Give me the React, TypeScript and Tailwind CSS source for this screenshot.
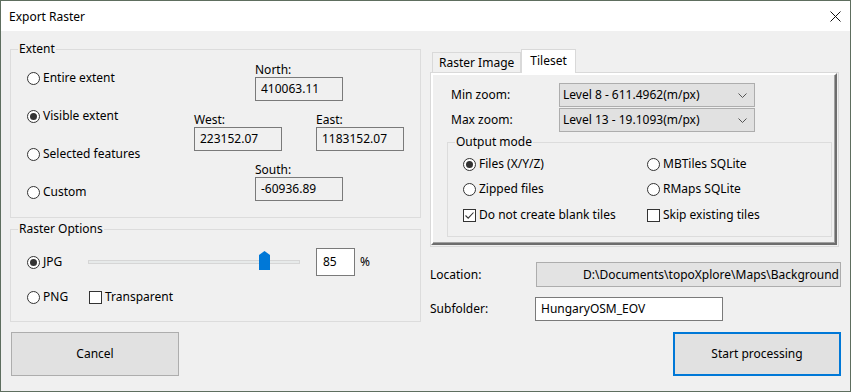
import React from "react";

const Radio = ({ checked }: { checked?: boolean }) => (
  <span className="w-[13px] h-[13px] rounded-full border border-[#333333] bg-white flex items-center justify-center shrink-0">
    {checked && <span className="w-[7px] h-[7px] rounded-full bg-[#333333]" />}
  </span>
);

const Check = ({ checked }: { checked?: boolean }) => (
  <span className="w-[13px] h-[13px] border border-[#333333] bg-white flex items-center justify-center shrink-0">
    {checked && (
      <svg width="11" height="11" viewBox="0 0 11 11">
        <path d="M1.5 5.5 L4.2 8.2 L9.5 2.5" fill="none" stroke="#333333" strokeWidth="1.1" />
      </svg>
    )}
  </span>
);

const RadioRow = ({ label, checked }: { label: string; checked?: boolean }) => (
  <div className="flex items-center gap-[3px]">
    <Radio checked={checked} />
    <span>{label}</span>
  </div>
);

const Coord = ({ label, value, className = "" }: { label: string; value: string; className?: string }) => (
  <div className={"flex flex-col " + className}>
    <div className="h-[15px] leading-[15px]">{label}</div>
    <div className="w-[88px] h-[24px] border border-[#7a7a7a] bg-[#f0f0f0] px-[5px] flex items-center">{value}</div>
  </div>
);

const Chevron = () => (
  <svg width="9" height="5" viewBox="0 0 9 5">
    <path d="M0.5 0.5 L4.5 4.5 L8.5 0.5" fill="none" stroke="#555555" strokeWidth="1" />
  </svg>
);

const Combo = ({ value }: { value: string }) => (
  <div className="w-[196px] h-[24px] border border-[#adadad] bg-[#e1e1e1] flex items-center justify-between pl-[3px] pr-[7px]">
    <span>{value}</span>
    <Chevron />
  </div>
);

export default function App() {
  return (
    <div
      className="w-[851px] h-[392px] border border-[#5e6e5f] flex flex-col text-[12px] text-black"
      style={{ fontFamily: '"Noto Sans", "Liberation Sans", sans-serif' }}
    >
      {/* Title bar */}
      <div className="h-[30px] bg-white flex items-center justify-between pl-[8px] pr-[9px] pt-[1px] shrink-0">
        <span>Export Raster</span>
        <svg width="11" height="11" viewBox="0 0 11 11">
          <path d="M0.5 0.5 L10.5 10.5 M10.5 0.5 L0.5 10.5" stroke="#111111" strokeWidth="1" />
        </svg>
      </div>

      {/* Body */}
      <div className="flex-1 bg-[#f0f0f0] flex pt-[18px] pl-[9px] pr-[9px] gap-[9px]">
        {/* Left column */}
        <div className="w-[411px] flex flex-col">
          {/* Extent */}
          <div className="relative h-[169px] border border-[#dcdcdc] flex">
            <span className="absolute -top-[9px] left-[7px] px-[1px] bg-[#f0f0f0] leading-[16px]">Extent</span>
            <div className="w-[183px] pl-[16px] pt-[9px] flex flex-col">
              <div className="h-[38px] flex items-center"><RadioRow label="Entire extent" /></div>
              <div className="h-[38px] flex items-center"><RadioRow label="Visible extent" checked /></div>
              <div className="h-[38px] flex items-center"><RadioRow label="Selected features" /></div>
              <div className="h-[38px] flex items-center"><RadioRow label="Custom" /></div>
            </div>
            <div className="pt-[12px] flex flex-col gap-[11px]">
              <Coord label="North:" value="410063.11" className="ml-[61px]" />
              <div className="flex gap-[34px]">
                <Coord label="West:" value="223152.07" />
                <Coord label="East:" value="1183152.07" />
              </div>
              <Coord label="South:" value="-60936.89" className="ml-[61px]" />
            </div>
          </div>

          {/* Raster options */}
          <div className="relative mt-[11px] h-[93px] border border-[#dcdcdc] pl-[16px] pt-[20px] flex flex-col gap-[11px]">
            <span className="absolute -top-[9px] left-[7px] px-[1px] bg-[#f0f0f0] leading-[16px]">Raster Options</span>
            <div className="h-[24px] flex items-center">
              <div className="w-[61px]"><RadioRow label="JPG" checked /></div>
              <div className="relative w-[212px] h-[20px] flex items-center">
                <div className="w-full h-[4px] bg-[#e7eaea] border border-[#d6d6d6]" />
                <svg className="absolute left-[171px] top-[-1px]" width="11" height="19" viewBox="0 0 11 19">
                  <path d="M0 4 L5.5 0 L11 4 L11 19 L0 19 Z" fill="#0078d7" />
                </svg>
              </div>
              <div className="ml-[16px] w-[39px] h-[28px] border border-[#7a7a7a] bg-white pl-[6px] flex items-center">85</div>
              <span className="ml-[5px]">%</span>
            </div>
            <div className="h-[24px] flex items-center">
              <div className="w-[62px]"><RadioRow label="PNG" /></div>
              <div className="flex items-center gap-[3px]">
                <Check />
                <span>Transparent</span>
              </div>
            </div>
          </div>

          {/* Cancel */}
          <button className="mt-[10px] ml-[1px] w-[168px] h-[44px] bg-[#e1e1e1] border border-[#adadad] flex items-center justify-center">
            Cancel
          </button>
        </div>

        {/* Right column */}
        <div className="w-[411px] flex flex-col">
          {/* Tabs */}
          <div className="h-[23px] flex items-end pl-[2px]">
            <div className="h-[20px] px-[6px] border border-b-0 border-[#d9d9d9] bg-[#f0f0f0] flex items-center">Raster Image</div>
            <div className="relative z-10 h-[24px] -mb-[1px] px-[8px] border border-b-0 border-[#d9d9d9] bg-white flex items-start pt-[2px]">Tileset</div>
          </div>
          {/* Panel */}
          <div className="w-[409px] h-[175px] border border-[#d9d9d9] pr-[1px] pb-[1px]">
            <div className="h-full border-t-2 border-l-2 border-white border-r-2 border-b-2 border-r-[#6d6d6d] border-b-[#6d6d6d] shadow-[inset_-1px_-1px_0_#a0a0a0] pl-[14px] pr-[4px]">
              <div className="mt-[8px] h-[24px] flex items-center">
                <span className="w-[112px] pl-[4px]">Min zoom:</span>
                <Combo value="Level 8 - 611.4962(m/px)" />
              </div>
              <div className="mt-[1px] h-[24px] flex items-center">
                <span className="w-[112px] pl-[4px]">Max zoom:</span>
                <Combo value="Level 13 - 19.1093(m/px)" />
              </div>
              <div className="relative mt-[10px] w-[385px] h-[95px] border border-[#dcdcdc] pl-[15px] pt-[9px]">
                <span className="absolute -top-[9px] left-[7px] px-[1px] bg-[#f0f0f0] leading-[16px]">Output mode</span>
                <div className="grid grid-cols-[184px_1fr] auto-rows-[24px] gap-y-[1px] items-center">
                  <RadioRow label="Files (X/Y/Z)" checked />
                  <RadioRow label="MBTiles SQLite" />
                  <RadioRow label="Zipped files" />
                  <RadioRow label="RMaps SQLite" />
                  <div className="flex items-center gap-[3px] mt-[2px]"><Check checked /><span>Do not create blank tiles</span></div>
                  <div className="flex items-center gap-[3px] mt-[2px]"><Check /><span>Skip existing tiles</span></div>
                </div>
              </div>
            </div>
          </div>

          {/* Location */}
          <div className="mt-[15px] h-[25px] flex items-center">
            <span className="w-[106px]">Location:</span>
            <div className="flex-1 h-[25px] border border-[#adadad] bg-[#e3e3e3] flex items-center justify-end pr-[1px] overflow-hidden whitespace-nowrap">
              D:\Documents\topoXplore\Maps\Background
            </div>
          </div>
          {/* Subfolder */}
          <div className="mt-[10px] h-[24px] flex items-center">
            <span className="w-[105px]">Subfolder:</span>
            <div className="w-[188px] h-[24px] border border-[#7a7a7a] bg-white flex items-center pl-[5px]">HungaryOSM_EOV</div>
          </div>
          {/* Start */}
          <button className="mt-[11px] self-end w-[168px] h-[44px] bg-[#e1e1e1] border-2 border-[#0078d7] flex items-center justify-center">
            Start processing
          </button>
        </div>
      </div>
    </div>
  );
}
